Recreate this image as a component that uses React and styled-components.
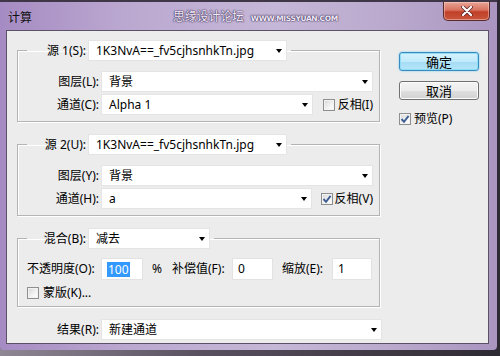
import React from "react";
import styled, { createGlobalStyle, css } from "styled-components";

const GlobalStyle = createGlobalStyle`
  html, body { margin: 0; padding: 0; }
  body {
    width: 500px;
    height: 356px;
    overflow: hidden;
    background: linear-gradient(90deg, #8f8794 0%, #5a5160 40%, #2e2a33 100%);
    font-family: "Noto Sans", "Noto Sans CJK SC", sans-serif;
    font-size: 12px;
    line-height: 16px;
    color: #000;
  }
`;

const Window = styled.div`
  width: 497px;
  height: 350px;
  box-sizing: border-box;
  border-top: 2px solid #3f3747;
  border-radius: 0 0 4px 4px;
  background: linear-gradient(90deg, #a58bc3 0%, #bba8d0 25%, #c5b7d7 55%, #b9a8cc 80%, #a995c0 100%);
  display: flex;
  flex-direction: column;
`;

const TitleBar = styled.div`
  height: 28px;
  display: flex;
  align-items: center;
  padding-left: 8px;
`;

const Title = styled.span`
  font-family: "Noto Sans CJK SC", sans-serif;
  font-size: 12px;
  color: #111;
  width: 24px;
  margin-top: 2px;
`;

const Watermark = styled.span`
  margin-left: 141px;
  margin-top: 2px;
  display: flex;
  align-items: baseline;
  gap: 7px;
  color: #f1eaf8;
  text-shadow: 0 0 1px #3c2d55, 0 0 1px #3c2d55, 0 0 2px #5b4a78;
`;

const WatermarkCn = styled.span`
  font-family: "Noto Sans CJK SC", sans-serif;
  font-size: 12px;
  letter-spacing: -0.2px;
`;

const WatermarkEn = styled.span`
  font-family: "DejaVu Sans", sans-serif;
  font-size: 7.5px;
  font-weight: bold;
  letter-spacing: -0.4px;
`;

const CloseButton = styled.div`
  margin-left: auto;
  margin-right: 7px;
  align-self: flex-start;
  width: 47px;
  height: 19px;
  box-sizing: border-box;
  border: 1px solid #5b2b2b;
  border-top: none;
  border-radius: 0 0 5px 5px;
  background: linear-gradient(#e9a597 0%, #d8725f 45%, #c13f28 55%, #c8563c 100%);
  box-shadow: inset 0 0 0 1px rgba(255, 220, 210, 0.45);
  display: flex;
  align-items: center;
  justify-content: center;
`;

const Content = styled.div`
  flex: 1;
  margin: 0 8px 6px 6px;
  background: #ececec;
  border: 1px solid #5b5267;
  display: flex;
  padding: 9px 0 0 10px;
`;

const LeftColumn = styled.div`
  width: 365px;
  display: flex;
  flex-direction: column;
`;

const Group = styled.fieldset`
  margin: 0 0 12px 0;
  width: 363px;
  min-width: 0;
  box-sizing: border-box;
  border: 1px solid #b4b4b4;
  box-shadow: inset 1px 1px 0 #fff, 1px 1px 0 #fff;
  padding: ${(p) => p.$top ?? 10}px 6px 6px 9px;
`;

const Legend = styled.legend`
  padding: 0 4px 0 0;
  display: flex;
  align-items: center;
`;

const LegendLabel = styled.span`
  width: 59px;
  margin-right: 2px;
  text-align: right;
  white-space: nowrap;
`;

const Row = styled.div`
  display: flex;
  align-items: center;
  height: 21px;
  & + & { margin-top: 2px; }
`;

const RowLabel = styled.span`
  width: ${(p) => p.$w ?? 72}px;
  margin-right: 2px;
  text-align: right;
  white-space: nowrap;
  flex: none;
`;

const Select = styled.div`
  display: flex;
  align-items: center;
  height: 21px;
  box-sizing: border-box;
  background: #fff;
  border: 1px solid #e4e4e4;
  padding: 0 4px 0 7px;
  white-space: nowrap;
  ${(p) =>
    p.$w
      ? css`width: ${p.$w}px; flex: none;`
      : css`flex: 1; min-width: 0;`}
`;

const Arrow = styled.span`
  margin-left: auto;
  width: 0;
  height: 0;
  border-left: 3.5px solid transparent;
  border-right: 3.5px solid transparent;
  border-top: 4px solid #000;
`;

const CheckLabel = styled.label`
  display: flex;
  align-items: center;
  gap: ${(p) => p.$gap ?? 3}px;
  margin-left: ${(p) => p.$ml ?? 0}px;
  margin-top: ${(p) => p.$mt ?? 0}px;
  white-space: nowrap;
`;

const Box = styled.span`
  width: 12px;
  height: 12px;
  box-sizing: border-box;
  border: 1px solid #8e8f8f;
  background: linear-gradient(135deg, #d6d6d6 0%, #f4f4f4 60%, #fff 100%);
  box-shadow: inset 0 0 0 1px #f2f2f2;
  display: flex;
  align-items: center;
  justify-content: center;
  flex: none;
`;

const InlineRow = styled.div`
  display: flex;
  align-items: center;
  height: 22px;
`;

const Text = styled.span`
  white-space: nowrap;
  flex: none;
  width: ${(p) => (p.$w ? `${p.$w}px` : "auto")};
  margin-left: ${(p) => p.$ml ?? 0}px;
`;

const NumInput = styled.div`
  width: ${(p) => p.$w}px;
  height: 22px;
  box-sizing: border-box;
  background: #fff;
  border: 1px solid #e2e2e2;
  display: flex;
  align-items: center;
  padding-left: 5px;
  flex: none;
`;

const Highlight = styled.span`
  background: #3399ff;
  color: #fff;
  line-height: 15px;
  padding: 0 1px;
`;

const MaskRow = styled.div`
  margin-top: 5px;
  height: 15px;
  display: flex;
  align-items: center;
`;

const ResultRow = styled.div`
  display: flex;
  align-items: center;
  height: 21px;
`;

const RightColumn = styled.div`
  margin-left: 17px;
  margin-top: 12px;
  display: flex;
  flex-direction: column;
  align-items: flex-start;
`;

const Button = styled.div`
  width: 80px;
  height: 19px;
  box-sizing: border-box;
  border-radius: 3px;
  display: flex;
  align-items: center;
  justify-content: center;
  font-family: "Noto Sans CJK SC", sans-serif;
  font-size: 13px;
  margin-bottom: 10px;
  ${(p) =>
    p.$default
      ? css`
          border: 1px solid #3a8cbf;
          background: linear-gradient(#d6f2fd 0%, #c0eafb 50%, #a6ddf5 55%, #b6e6f9 100%);
          box-shadow: inset 0 0 0 1px #8fdcf7, 0 0 2px #6cc7ee;
        `
      : css`
          border: 1px solid #707070;
          background: linear-gradient(#f4f4f4 0%, #ececec 50%, #dedede 55%, #d2d2d2 100%);
          box-shadow: inset 0 0 0 1px #fbfbfb;
        `}
`;

function Check({ checked }) {
  return (
    <Box>
      {checked && (
        <svg width="10" height="10" viewBox="0 0 10 10">
          <path d="M1.5 5 L4 7.8 L8.6 1.8" fill="none" stroke="#3f5e93" strokeWidth="1.9" />
        </svg>
      )}
    </Box>
  );
}

function Dropdown({ children, w }) {
  return (
    <Select $w={w}>
      <span>{children}</span>
      <Arrow />
    </Select>
  );
}

export default function App() {
  return (
    <>
      <GlobalStyle />
      <Window>
        <TitleBar>
          <Title>计算</Title>
          <Watermark>
            <WatermarkCn>思缘设计论坛</WatermarkCn>
            <WatermarkEn>WWW.MISSYUAN.COM</WatermarkEn>
          </Watermark>
          <CloseButton>
            <svg width="12" height="10" viewBox="0 0 12 10">
              <path d="M2 1 L10 9 M10 1 L2 9" stroke="#5a2020" strokeWidth="3.6" strokeLinecap="round" />
              <path d="M2 1 L10 9 M10 1 L2 9" stroke="#fff" strokeWidth="2.2" strokeLinecap="round" />
            </svg>
          </CloseButton>
        </TitleBar>
        <Content>
          <LeftColumn>
            <Group>
              <Legend>
                <LegendLabel>源 1(S):</LegendLabel>
                <Dropdown w={199}>1K3NvA==_fv5cjhsnhkTn.jpg</Dropdown>
              </Legend>
              <Row>
                <RowLabel>图层(L):</RowLabel>
                <Dropdown>背景</Dropdown>
              </Row>
              <Row>
                <RowLabel>通道(C):</RowLabel>
                <Dropdown>Alpha 1</Dropdown>
                <CheckLabel $ml={10}>
                  <Check />
                  反相(I)
                </CheckLabel>
              </Row>
            </Group>
            <Group>
              <Legend>
                <LegendLabel>源 2(U):</LegendLabel>
                <Dropdown w={199}>1K3NvA==_fv5cjhsnhkTn.jpg</Dropdown>
              </Legend>
              <Row>
                <RowLabel>图层(Y):</RowLabel>
                <Dropdown>背景</Dropdown>
              </Row>
              <Row>
                <RowLabel>通道(H):</RowLabel>
                <Dropdown>a</Dropdown>
                <CheckLabel $ml={9} $gap={2}>
                  <Check checked />
                  反相(V)
                </CheckLabel>
              </Row>
            </Group>
            <Group $top={9}>
              <Legend>
                <LegendLabel>混合(B):</LegendLabel>
                <Dropdown w={122}>减去</Dropdown>
              </Legend>
              <InlineRow>
                <Text $w={74}>不透明度(O):</Text>
                <NumInput $w={42}>
                  <Highlight>100</Highlight>
                </NumInput>
                <Text $ml={9}>%</Text>
                <Text $ml={10} $w={60}>补偿值(F):</Text>
                <NumInput $w={41}>0</NumInput>
                <Text $ml={9} $w={50}>缩放(E):</Text>
                <NumInput $w={40}>1</NumInput>
              </InlineRow>
              <MaskRow>
                <CheckLabel $gap={4}>
                  <Check />
                  蒙版(K)...
                </CheckLabel>
              </MaskRow>
            </Group>
            <ResultRow>
              <RowLabel $w={82}>结果(R):</RowLabel>
              <Dropdown w={281}>新建通道</Dropdown>
            </ResultRow>
          </LeftColumn>
          <RightColumn>
            <Button $default>确定</Button>
            <Button>取消</Button>
            <CheckLabel $gap={3} $mt={1}>
              <Check checked />
              预览(P)
            </CheckLabel>
          </RightColumn>
        </Content>
      </Window>
    </>
  );
}
